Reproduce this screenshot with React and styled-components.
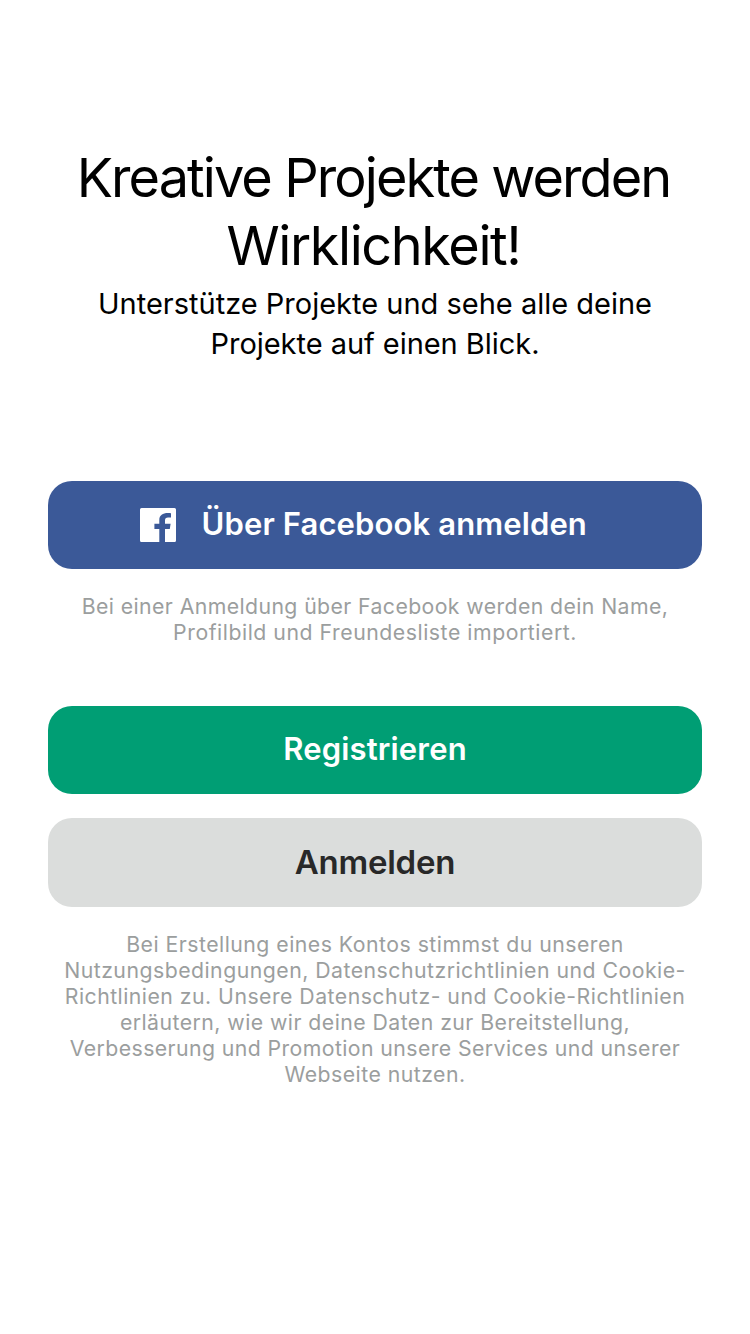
import React from "react";
import styled, { createGlobalStyle } from "styled-components";

const GlobalStyle = createGlobalStyle`
  *, *::before, *::after { box-sizing: border-box; }
  body { margin: 0; background: #fff; font-family: Inter, sans-serif; }
`;

const Screen = styled.main`
  display: flex;
  flex-direction: column;
  align-items: stretch;
  min-height: 1334px;
  padding: 144px 48px 0;
  background: #fff;
`;

const Header = styled.header`
  color: #000;
  text-align: center;
`;

const Line = styled.span`
  display: block;
  white-space: nowrap;
  letter-spacing: ${({ $spacing = 0 }) => $spacing}px;
`;

const Title = styled.h1`
  margin: 0;
  padding-right: 3px;
  font-size: 54px;
  font-weight: 400;
  line-height: 68px;
`;

const Subtitle = styled.p`
  margin: 4px 0 0;
  font-size: 29px;
  font-weight: 400;
  line-height: 40px;
`;

const Button = styled.button`
  display: flex;
  align-items: center;
  justify-content: center;
  flex: none;
  width: 100%;
  height: ${({ $height = 88 }) => $height}px;
  margin: ${({ $top }) => $top}px 0 0;
  padding: 0 0 2px;
  border: 0;
  border-radius: 24px;
  background: ${({ $background }) => $background};
  color: ${({ $color = "#fff" }) => $color};
  font: 600 ${({ $size = 31 }) => $size}px/40px Inter, sans-serif;
`;

const FacebookIcon = styled.svg`
  flex: none;
  width: 36px;
  height: 34px;
  margin: 2px 25.75px 0 -23.25px;
`;

const Note = styled.p`
  margin: ${({ $top }) => $top}px 0 0;
  color: #9b9e9e;
  font-size: 21.25px;
  line-height: 26px;
  text-align: center;
`;

export default function App() {
  return (
    <>
      <GlobalStyle />
      <Screen>
        <Header>
          <Title>
            <Line $spacing={-1.92}>Kreative Projekte werden</Line>
            <Line $spacing={-1.4}>Wirklichkeit!</Line>
          </Title>
          <Subtitle>
            <Line>Unterstütze Projekte und sehe alle deine</Line>
            <Line $spacing={-0.04}>Projekte auf einen Blick.</Line>
          </Subtitle>
        </Header>
        <Button $top={117} $background="#3b5998">
          <FacebookIcon viewBox="0 0 36 34" aria-hidden="true">
            <path
              fill="#fff"
              d="M1.5 0H34.5Q36 0 36 1.5V32.5Q36 34 34.5 34H25V21H29.8L30.6 15.8H25V12.5C25 10.5 26 9.6 28 9.6H31V5.2C24.5 4.2 19.3 6 19.3 12V15.8H14.4V21H19.3V34H1.5Q0 34 0 32.5V1.5Q0 0 1.5 0Z"
            />
          </FacebookIcon>
          <Line $spacing={0.12}>Über Facebook anmelden</Line>
        </Button>
        <Note $top={24}>
          <Line $spacing={0.4}>Bei einer Anmeldung über Facebook werden dein Name,</Line>
          <Line $spacing={0.53}>Profilbild und Freundesliste importiert.</Line>
        </Note>
        <Button $top={61} $background="#009e74">
          <Line $spacing={0.16}>Registrieren</Line>
        </Button>
        <Button $top={24} $height={89} $background="#dbdddc" $color="#282828" $size={33}>
          <Line $spacing={-0.25}>Anmelden</Line>
        </Button>
        <Note $top={24}>
          <Line $spacing={0.48}>Bei Erstellung eines Kontos stimmst du unseren</Line>
          <Line $spacing={0.48}>Nutzungsbedingungen, Datenschutzrichtlinien und Cookie-</Line>
          <Line $spacing={0.47}>Richtlinien zu. Unsere Datenschutz- und Cookie-Richtlinien</Line>
          <Line $spacing={0.45}>erläutern, wie wir deine Daten zur Bereitstellung,</Line>
          <Line $spacing={0.41}>Verbesserung und Promotion unsere Services und unserer</Line>
          <Line $spacing={0.47}>Webseite nutzen.</Line>
        </Note>
      </Screen>
    </>
  );
}
